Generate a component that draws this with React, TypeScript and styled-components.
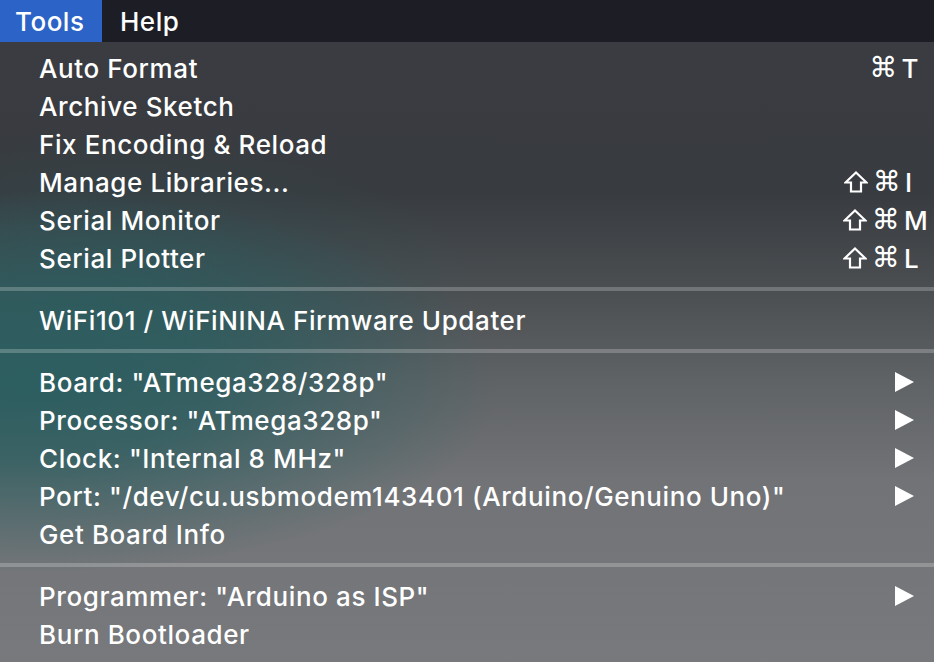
import React from "react";
import styled, { createGlobalStyle } from "styled-components";

const Global = createGlobalStyle`
  html, body { margin: 0; padding: 0; background: #1c1d25; }
  body { width: 934px; height: 662px; overflow: hidden; font-family: Inter, "Noto Sans", "DejaVu Sans", sans-serif; }
`;

const Screen = styled.div`
  width: 934px;
  height: 662px;
  display: flex;
  flex-direction: column;
  overflow: hidden;
`;

const MenuBar = styled.div`
  height: 42px;
  flex: none;
  display: flex;
  align-items: stretch;
  background: #1c1d25;
  color: #ffffff;
  font-size: 26px;
  font-weight: 500;
  letter-spacing: 0.5px;
`;

const BarItem = styled.div<{ $active?: boolean }>`
  display: flex;
  align-items: center;
  box-sizing: border-box;
  padding-left: ${(p) => (p.$active ? "15px" : "18px")};
  width: ${(p) => (p.$active ? "102px" : "auto")};
  background: ${(p) => (p.$active ? "#2b63c6" : "transparent")};
`;

const Menu = styled.div`
  flex: 1;
  display: flex;
  flex-direction: column;
  padding-top: 7px;
  background:
    radial-gradient(ellipse 470px 190px at 30px 340px, rgba(42, 94, 96, 0.95) 0%, rgba(42, 94, 96, 0.75) 40%, rgba(42, 94, 96, 0) 100%),
    radial-gradient(ellipse 360px 150px at 120px 240px, rgba(44, 84, 88, 0.6) 0%, rgba(44, 84, 88, 0) 100%),
    linear-gradient(to bottom, #3a3c41 0px, #383b3f 150px, #4b4f52 250px, #606366 340px, #717376 440px, #77797c 620px);
`;

const Row = styled.div`
  height: 38px;
  flex: none;
  display: flex;
  align-items: center;
  padding-left: 39px;
  padding-right: 20px;
  color: #ffffff;
  font-size: 26px;
  font-weight: 500;
  letter-spacing: 0.6px;
`;

const Label = styled.span`
  flex: 1;
  white-space: nowrap;
`;

const Shortcut = styled.span`
  display: flex;
  align-items: center;
  width: 76px;
  margin-right: -5px;
`;

const Mods = styled.span`
  width: 58px;
  display: flex;
  justify-content: flex-end;
  align-items: center;
  gap: 5px;
`;

const Cmd = styled.span`
  font-family: "DejaVu Sans", sans-serif;
  font-size: 28px;
  font-weight: 400;
  line-height: 1;
  letter-spacing: 0;
`;

const Key = styled.span`
  padding-left: 4px;
`;

const Separator = styled.div`
  height: 24px;
  flex: none;
  display: flex;
  align-items: center;
  &::after {
    content: "";
    display: block;
    width: 100%;
    height: 4px;
    background: rgba(255, 255, 255, 0.22);
  }
`;

const Arrow = styled.svg`
  width: 19px;
  height: 20px;
`;

const ShiftIcon = () => (
  <svg width="24" height="22" viewBox="0 0 24 22">
    <path d="M12 1.5 L22.5 11.5 L17 11.5 L17 20.5 L7 20.5 L7 11.5 L1.5 11.5 Z" fill="none" stroke="#fff" strokeWidth="2.2" strokeLinejoin="miter" />
  </svg>
);

type Item = { label: string; shift?: boolean; key?: string; sub?: boolean } | "sep";

const items: Item[] = [
  { label: "Auto Format", key: "T" },
  { label: "Archive Sketch" },
  { label: "Fix Encoding & Reload" },
  { label: "Manage Libraries...", shift: true, key: "I" },
  { label: "Serial Monitor", shift: true, key: "M" },
  { label: "Serial Plotter", shift: true, key: "L" },
  "sep",
  { label: "WiFi101 / WiFiNINA Firmware Updater" },
  "sep",
  { label: 'Board: "ATmega328/328p"', sub: true },
  { label: 'Processor: "ATmega328p"', sub: true },
  { label: 'Clock: "Internal 8 MHz"', sub: true },
  { label: 'Port: "/dev/cu.usbmodem143401 (Arduino/Genuino Uno)"', sub: true },
  { label: "Get Board Info" },
  "sep",
  { label: 'Programmer: "Arduino as ISP"', sub: true },
  { label: "Burn Bootloader" },
];

export default function App() {
  return (
    <Screen>
      <Global />
      <MenuBar>
        <BarItem $active>Tools</BarItem>
        <BarItem>Help</BarItem>
      </MenuBar>
      <Menu>
        {items.map((it, i) =>
          it === "sep" ? (
            <Separator key={i} />
          ) : (
            <Row key={i}>
              <Label>{it.label}</Label>
              {it.key && (
                <Shortcut>
                  <Mods>
                    {it.shift && <ShiftIcon />}
                    <Cmd>⌘</Cmd>
                  </Mods>
                  <Key>{it.key}</Key>
                </Shortcut>
              )}
              {it.sub && (
                <Arrow viewBox="0 0 19 20">
                  <polygon points="0,0 19,10 0,20" fill="#fff" />
                </Arrow>
              )}
            </Row>
          )
        )}
      </Menu>
    </Screen>
  );
}
